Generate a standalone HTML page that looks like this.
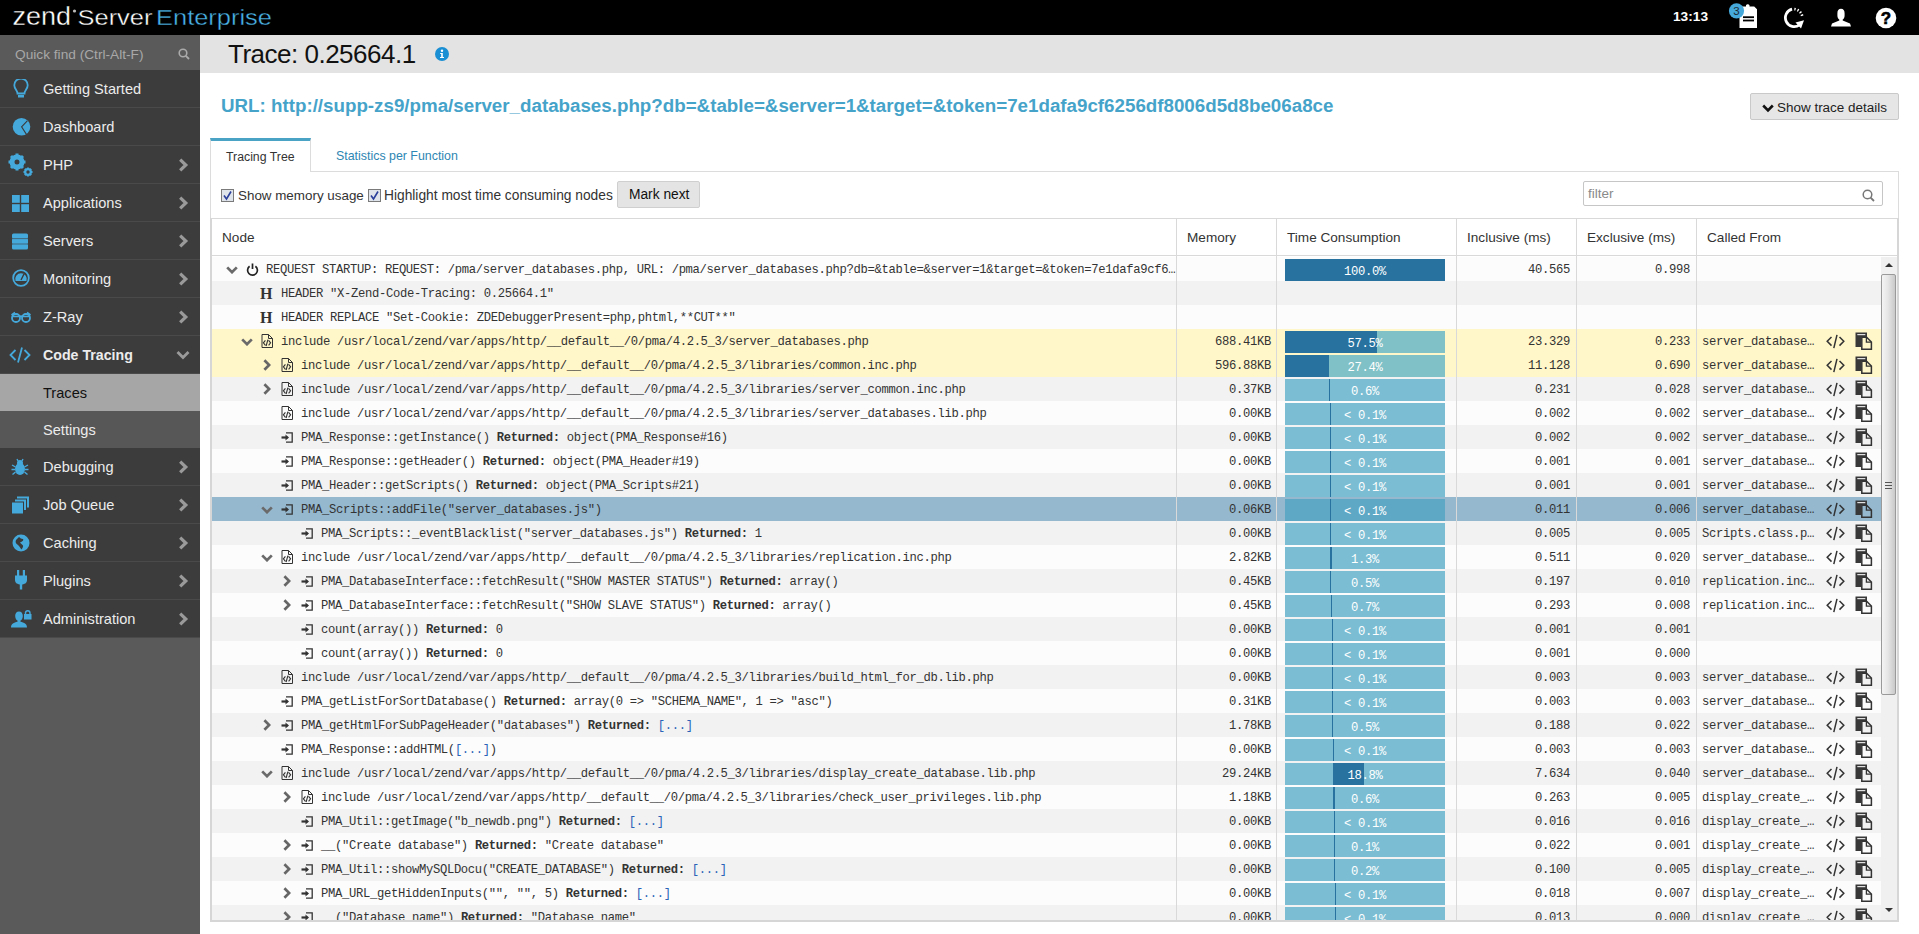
<!DOCTYPE html>
<html><head><meta charset="utf-8"><title>Zend Server</title>
<style>
*{margin:0;padding:0;box-sizing:border-box}
html,body{width:1919px;height:934px;overflow:hidden;background:#fff;font-family:"Liberation Sans",sans-serif;color:#222}
body{position:relative}
#hdr{position:absolute;left:0;top:0;width:1919px;height:35px;background:#000;z-index:5}
.logo{position:absolute;left:0;top:0}
.clock{position:absolute;left:1673px;top:9px;font-size:13.7px;font-weight:bold;color:#fff;line-height:16px}
.hic1{position:absolute;left:1728px;top:2px}
.hic2{position:absolute;left:1783px;top:7px}
.hic3{position:absolute;left:1830px;top:8px}
.hic4{position:absolute;left:1875px;top:7px}
#side{position:absolute;left:0;top:0;width:200px;height:934px;background:#5a5a5a}
.qf{position:absolute;left:0;top:35px;width:200px;height:35px;background:#5a5a5a}
.qf span{position:absolute;left:15px;top:12px;font-size:13.7px;color:#a8a8a8;line-height:16px}
.qfs{position:absolute;left:178px;top:13px}
.si{position:absolute;left:0;width:200px;height:38px;background:#3c3c3c;border-bottom:1px solid #4a4a4a}
.sic{position:absolute;line-height:0}
.sl{position:absolute;left:43px;top:1px;line-height:37px;font-size:14.6px;color:#ececec;white-space:nowrap}
.sl.b{font-weight:bold;font-size:14.2px}
.sch{position:absolute;left:178px;top:12px}
.schd{position:absolute;left:176px;top:14px}
.sub{position:absolute;left:0;width:200px;height:37px}
.sub.tr{background:#a6a6a6}
.sub.tr .sl{color:#111}
.sub.st{background:#575757}
#titlebar{position:absolute;left:200px;top:35px;width:1719px;height:38px;background:#e3e3e3}
.tt{position:absolute;left:28px;top:4px;font-size:26px;letter-spacing:-0.5px;line-height:30px;color:#111;white-space:nowrap}
.info{position:absolute;left:235px;top:12px}
.url{position:absolute;left:221px;top:95px;font-size:18.75px;font-weight:bold;color:#45a3ca;line-height:22px;white-space:nowrap}
.stdbtn{position:absolute;left:1750px;top:93px;width:149px;height:27px;background:#e6e6e6;border:1px solid #c9c9c9;border-radius:2px}
.stdbtn svg{position:absolute;left:11px;top:10px}
.stdbtn span{position:absolute;left:26px;top:5px;font-size:13.46px;line-height:17px;color:#222;white-space:nowrap}
.tab1{position:absolute;left:210px;top:138px;width:101px;height:34px;background:#fff;border-top:3px solid #4aa3c4;border-left:1px solid #dcdcdc;border-right:1px solid #dcdcdc;font-size:12.3px;color:#333;padding-left:15px;line-height:32px;z-index:2}
.tab2{position:absolute;left:336px;top:142px;font-size:12.4px;color:#2d86b3;line-height:29px;white-space:nowrap}
.panel{position:absolute;left:210px;top:171px;width:1689px;height:751px;border:1px solid #dcdcdc;border-bottom:none}
.cb{position:absolute;top:189px;line-height:0}
.cb1{left:221px}.cb2{left:368px}
.lbl1,.lbl2{position:absolute;top:187px;font-size:13.78px;line-height:17px;color:#333;white-space:nowrap}
.lbl1{left:238px;font-size:13.4px!important}.lbl2{left:384px}
.marknext{position:absolute;left:617px;top:181px;width:83px;height:27px;background:#e4e4e4;border:1px solid #cfcfcf;border-radius:2px;font-size:13.78px;line-height:26px;color:#111;padding-left:11px}
.filter{position:absolute;left:1583px;top:181px;width:300px;height:25px;border:1px solid #c6c6c6;border-radius:2px;background:#fff}
.filter span{position:absolute;left:4px;top:3px;font-size:13.5px;color:#8a8a8a;line-height:17px}
.filter svg{position:absolute;left:278px;top:7px}
#tbl{position:absolute;left:210px;top:218px;width:1689px;height:704px;border:2px solid #d6d6d6;border-top:1px solid #d9d9d9}
.th{position:absolute;top:0;height:37px;border-bottom:1px solid #d9d9d9;font-size:13.6px;color:#333;line-height:37px;padding-left:10px;white-space:nowrap;background:#fff}
.vl{position:absolute;top:0;width:1px;height:701px;background:#d9d9d9;z-index:3}
#body{position:absolute;left:212px;top:257px;width:1669px;height:663px;overflow:hidden}
.r{position:absolute;left:0;width:1669px;height:24px;font-family:"Liberation Mono",monospace;font-size:12.2px;letter-spacing:-0.32px;color:#333;white-space:nowrap}
.r.w{background:#fcfcfc}.r.g{background:#f2f2f2}.r.hl{background:#fff6c9}.r.sel{background:#95b8cf}
.r b{font-weight:bold}
.dots{color:#2a63b8}
.ic,.tg,.hic{position:absolute}
.ic{left:0}
.tg{margin-left:-212px}
.ic{margin-left:-212px}
.hic{margin-left:-212px;top:3px;font-family:"Liberation Serif",serif;font-weight:bold;font-size:16px;line-height:20px;color:#333}
.nt{position:absolute;top:1px;line-height:24px}
.mem{position:absolute;left:965px;width:94px;top:1px;line-height:24px;text-align:right}
.bar{position:absolute;left:1073px;top:2px;width:160px;height:22px;background:#7bbdd2;overflow:hidden}
.r.hl .bar{background:#7fc1c6}
.r.sel .bar{background:#5fa8c5}
.bar .dk{position:absolute;top:0;height:22px;background:#27729f}
.bar span{position:absolute;left:0;top:1px;width:160px;text-align:center;line-height:24px;color:#fff}
.inc{position:absolute;left:1245px;width:113px;top:1px;line-height:24px;text-align:right}
.exc{position:absolute;left:1365px;width:113px;top:1px;line-height:24px;text-align:right}
.cf{position:absolute;left:1490px;top:1px;line-height:24px}
.cf1{position:absolute;left:1614px;top:5px}
.cf2{position:absolute;left:1643px;top:3px}
.sb{position:absolute;left:1881px;top:257px;width:16px;height:663px;background:#f0f0f0}
.sbup{position:absolute;left:4px;top:6px;width:0;height:0;border-left:4px solid transparent;border-right:4px solid transparent;border-bottom:4px solid #333}
.sbdn{position:absolute;left:4px;top:651px;width:0;height:0;border-left:4px solid transparent;border-right:4px solid transparent;border-top:4px solid #333}
.thumb{position:absolute;left:0;top:17px;width:15px;height:421px;border:1px solid #9a9a9a;border-radius:2px;background:linear-gradient(to right,#f4f4f4,#e6e6e6 45%,#c9c9c9)}
.grip{position:absolute;left:3px;top:207px;width:7px;height:7px;background:linear-gradient(#555 0,#555 1.5px,transparent 1.5px,transparent 3px,#555 3px,#555 4.5px,transparent 4.5px,transparent 6px,#555 6px,#555 7.5px)}

</style></head><body>
<div id="hdr">
  <svg class="logo" width="290" height="35" viewBox="0 0 290 35"><text x="12.5" y="25" font-family="Liberation Sans" font-size="25" fill="#fff" stroke="#000" stroke-width="0.35" textLength="58.5" lengthAdjust="spacingAndGlyphs">zend</text><circle cx="74.5" cy="11" r="1.6" fill="#bbb"/><text x="77.5" y="25" font-family="Liberation Sans" font-size="21.8" fill="#fff" stroke="#000" stroke-width="0.35" textLength="75" lengthAdjust="spacingAndGlyphs">Server</text><text x="156" y="25" font-family="Liberation Sans" font-size="21.8" fill="#4ab4e8" stroke="#000" stroke-width="0.35" textLength="116" lengthAdjust="spacingAndGlyphs">Enterprise</text></svg>
  <div class="clock">13:13</div>
  <svg class="hic1" width="32" height="28" viewBox="0 0 32 28"><path d="M11.5 4.5H18V3.2A2 2 0 0 1 21.5 3.2V4.5H26.2L29 7.3V26H11.5Z" fill="#fff"/><rect x="15" y="14.3" width="11" height="1.8" fill="#000"/><rect x="15" y="17.6" width="11" height="1.8" fill="#000"/><circle cx="8.5" cy="8.8" r="7.6" fill="#45a9dc"/><text x="8.5" y="13" font-family="Liberation Sans" font-size="11.5" fill="#1b2a33" text-anchor="middle">3</text></svg>
  <svg class="hic2" width="24" height="24" viewBox="0 0 24 24"><path d="M9.07 2.23A8.8 8.8 0 1 0 16.5 17.8" fill="none" stroke="#fff" stroke-width="2.8"/><path d="M12.5 15.6L21 13.2L18 21.5Z" fill="#fff"/><path d="M11.37 2.13A8.8 8.8 0 0 1 19.37 10.13" fill="none" stroke="#fff" stroke-width="2.6" stroke-dasharray="1.3 1.9"/></svg>
  <svg class="hic3" width="22" height="20" viewBox="0 0 22 20"><path d="M11 0.8C8.6 0.8 7.4 2.4 7.4 5.2V7.5C7.4 9.6 8.3 11 9.3 11.6V12.6L2 15.6L1 18.6H21L20 15.6L12.7 12.6V11.6C13.7 11 14.6 9.6 14.6 7.5V5.2C14.6 2.4 13.4 0.8 11 0.8Z" fill="#fff"/></svg>
  <svg class="hic4" width="22" height="22" viewBox="0 0 22 22"><circle cx="11" cy="11" r="10.3" fill="#fff"/><text x="11" y="17" font-family="Liberation Sans" font-weight="bold" font-size="17" fill="#000" stroke="#000" stroke-width="0.6" text-anchor="middle">?</text></svg>
</div>
<div id="side">
  <div class="qf"><span>Quick find (Ctrl-Alt-F)</span><svg class="qfs" width="12" height="12" viewBox="0 0 12 12"><circle cx="5" cy="5" r="3.8" fill="none" stroke="#aaa" stroke-width="1.6"/><path d="M7.8 7.8L11 11" stroke="#aaa" stroke-width="1.8"/></svg></div>
<div class="si" style="top:70px"><div class="sic" style="left:13px;top:9px"><svg width="16" height="20" viewBox="0 0 16 20"><path d="M4.5 14.5C4.5 11.5 1.3 9.8 1.3 6.2A6.7 6.7 0 0 1 14.7 6.2C14.7 9.8 11.5 11.5 11.5 14.5Z" fill="none" stroke="#45a9dc" stroke-width="1.8"/><rect x="5" y="16" width="6" height="2.5" fill="#45a9dc"/></svg></div><div class="sl">Getting Started</div></div>
<div class="si" style="top:108px"><div class="sic" style="left:12px;top:9px"><svg width="20" height="20" viewBox="0 0 20 20"><circle cx="9.5" cy="9.8" r="8.8" fill="#45a9dc"/><path d="M15.5 3.6L9.6 9.8L14.6 17.6" fill="none" stroke="#3c3c3c" stroke-width="1.1"/></svg></div><div class="sl">Dashboard</div></div>
<div class="si" style="top:146px"><div class="sic" style="left:8px;top:7px"><svg width="26" height="24" viewBox="0 0 26 24"><circle cx="9" cy="9" r="5" fill="none" stroke="#45a9dc" stroke-width="5"/><g stroke="#45a9dc" stroke-width="3"><path d="M9 0.5V3.5M9 14.5V17.5M0.5 9H3.5M14.5 9H17.5M3 3L5 5M13 13L15 15M3 15L5 13M13 5L15 3"/></g><circle cx="20" cy="19" r="2.8" fill="none" stroke="#45a9dc" stroke-width="2.2"/><g stroke="#45a9dc" stroke-width="1.8"><path d="M20 14.5V16.5M20 21.5V23.5M15.5 19H17.5M22.5 19H24.5M16.8 15.8L18 17M22 21L23.2 22.2M16.8 22.2L18 21M22 17L23.2 15.8"/></g></svg></div><div class="sl">PHP</div><svg class="sch" width="11" height="14" viewBox="0 0 11 14"><path d="M2.2 1.6L7.8 7L2.2 12.4" fill="none" stroke="#9a9a9a" stroke-width="3.2"/></svg></div>
<div class="si" style="top:184px"><div class="sic" style="left:12px;top:11px"><svg width="17" height="17" viewBox="0 0 17 17"><rect x="0" y="0" width="7.8" height="7.8" fill="#45a9dc"/><rect x="9.2" y="0" width="7.8" height="7.8" fill="#45a9dc"/><rect x="0" y="9.2" width="7.8" height="7.8" fill="#45a9dc"/><rect x="9.2" y="9.2" width="7.8" height="7.8" fill="#45a9dc"/></svg></div><div class="sl">Applications</div><svg class="sch" width="11" height="14" viewBox="0 0 11 14"><path d="M2.2 1.6L7.8 7L2.2 12.4" fill="none" stroke="#9a9a9a" stroke-width="3.2"/></svg></div>
<div class="si" style="top:222px"><div class="sic" style="left:11px;top:11px"><svg width="18" height="17" viewBox="0 0 18 17"><path d="M2.5 0.5H15.5Q17 0.5 17 2V4.6L16.2 5.6L17 6.6V10L16.2 11L17 12V15Q17 16.5 15.5 16.5H2.5Q1 16.5 1 15V12L1.8 11L1 10V6.6L1.8 5.6L1 4.6V2Q1 0.5 2.5 0.5Z" fill="#45a9dc"/><path d="M2 5.6H16M2 11H16" stroke="#3c3c3c" stroke-width="0.6"/></svg></div><div class="sl">Servers</div><svg class="sch" width="11" height="14" viewBox="0 0 11 14"><path d="M2.2 1.6L7.8 7L2.2 12.4" fill="none" stroke="#9a9a9a" stroke-width="3.2"/></svg></div>
<div class="si" style="top:260px"><div class="sic" style="left:12px;top:9px"><svg width="18" height="18" viewBox="0 0 18 18"><circle cx="9" cy="9" r="7.8" fill="none" stroke="#45a9dc" stroke-width="1.8"/><path d="M3.5 12A5.8 5.8 0 1 1 14.5 12Z" fill="#45a9dc"/><path d="M9 11L12 5" stroke="#3a3a3a" stroke-width="1.4"/></svg></div><div class="sl">Monitoring</div><svg class="sch" width="11" height="14" viewBox="0 0 11 14"><path d="M2.2 1.6L7.8 7L2.2 12.4" fill="none" stroke="#9a9a9a" stroke-width="3.2"/></svg></div>
<div class="si" style="top:298px"><div class="sic" style="left:11px;top:13px"><svg width="20" height="12" viewBox="0 0 20 12"><circle cx="5" cy="7" r="4" fill="none" stroke="#45a9dc" stroke-width="1.8"/><circle cx="15" cy="7" r="4" fill="none" stroke="#45a9dc" stroke-width="1.8"/><path d="M0.5 4L4 1.5M19.5 4L16 1.5M8.5 5.5Q10 4.5 11.5 5.5M1 5.5H19" fill="none" stroke="#45a9dc" stroke-width="1.6"/></svg></div><div class="sl">Z-Ray</div><svg class="sch" width="11" height="14" viewBox="0 0 11 14"><path d="M2.2 1.6L7.8 7L2.2 12.4" fill="none" stroke="#9a9a9a" stroke-width="3.2"/></svg></div>
<div class="si" style="top:336px"><div class="sic" style="left:9px;top:10px"><svg width="22" height="18" viewBox="0 0 22 18"><path d="M6.5 4L1.5 9L6.5 14M15.5 4L20.5 9L15.5 14M13 1.5L9 16.5" fill="none" stroke="#45a9dc" stroke-width="1.8"/></svg></div><div class="sl b">Code Tracing</div><svg class="schd" width="14" height="10" viewBox="0 0 14 10"><path d="M1.5 2L7 7.5L12.5 2" fill="none" stroke="#9a9a9a" stroke-width="2.8"/></svg></div>
<div class="sub tr" style="top:374px"><div class="sl">Traces</div></div><div class="sub st" style="top:411px"><div class="sl">Settings</div></div>
<div class="si" style="top:448px"><div class="sic" style="left:11px;top:10px"><svg width="18" height="18" viewBox="0 0 18 18"><ellipse cx="9" cy="11" rx="5" ry="6" fill="#45a9dc"/><circle cx="9" cy="5" r="3" fill="#45a9dc"/><g stroke="#45a9dc" stroke-width="1.4"><path d="M6 1L7 3M12 1L11 3M1 7L4.5 9M17 7L13.5 9M0.5 11.5H4M17.5 11.5H14M1.5 16.5L4.5 14M16.5 16.5L13.5 14"/></g></svg></div><div class="sl">Debugging</div><svg class="sch" width="11" height="14" viewBox="0 0 11 14"><path d="M2.2 1.6L7.8 7L2.2 12.4" fill="none" stroke="#9a9a9a" stroke-width="3.2"/></svg></div>
<div class="si" style="top:486px"><div class="sic" style="left:11px;top:10px"><svg width="19" height="18" viewBox="0 0 19 18"><rect x="6" y="0.5" width="12" height="11" fill="#45a9dc"/><rect x="3.5" y="3" width="12" height="11.5" fill="#45a9dc" stroke="#3a3a3a" stroke-width="1"/><rect x="0.5" y="6" width="12" height="12" fill="#45a9dc" stroke="#3a3a3a" stroke-width="1"/></svg></div><div class="sl">Job Queue</div><svg class="sch" width="11" height="14" viewBox="0 0 11 14"><path d="M2.2 1.6L7.8 7L2.2 12.4" fill="none" stroke="#9a9a9a" stroke-width="3.2"/></svg></div>
<div class="si" style="top:524px"><div class="sic" style="left:12px;top:10px"><svg width="18" height="18" viewBox="0 0 18 18"><circle cx="9" cy="9" r="8.5" fill="#45a9dc"/><path d="M7 3C8.5 4 9 5 11 5C12 6 10 8 8.5 8C7.5 9 10 10 11 11.5C11.5 13 10 14.5 9.5 15.5C8 14 7.5 12 6 11C4 10 3 8 4 6C5 5 6 4 7 3Z" fill="#3a3a3a"/></svg></div><div class="sl">Caching</div><svg class="sch" width="11" height="14" viewBox="0 0 11 14"><path d="M2.2 1.6L7.8 7L2.2 12.4" fill="none" stroke="#9a9a9a" stroke-width="3.2"/></svg></div>
<div class="si" style="top:562px"><div class="sic" style="left:14px;top:8px"><svg width="14" height="20" viewBox="0 0 14 20"><rect x="3" y="0" width="2.2" height="6" fill="#45a9dc"/><rect x="8.8" y="0" width="2.2" height="6" fill="#45a9dc"/><path d="M1 5.5H13V10C13 13 10.5 14.5 7 14.5C3.5 14.5 1 13 1 10Z" fill="#45a9dc"/><rect x="5.8" y="13" width="2.4" height="6.5" fill="#45a9dc"/></svg></div><div class="sl">Plugins</div><svg class="sch" width="11" height="14" viewBox="0 0 11 14"><path d="M2.2 1.6L7.8 7L2.2 12.4" fill="none" stroke="#9a9a9a" stroke-width="3.2"/></svg></div>
<div class="si" style="top:600px"><div class="sic" style="left:10px;top:10px"><svg width="22" height="18" viewBox="0 0 22 18"><path d="M9 1.5C6.5 1.5 5.2 3.5 5.2 6C5.2 8.2 6.3 10 7.5 10.5V11.8C4 12.5 1 13.8 1 17.5H17C17 13.8 14 12.5 10.5 11.8V10.5C11.7 10 12.8 8.2 12.8 6C12.8 3.5 11.5 1.5 9 1.5Z" fill="#45a9dc"/><rect x="14" y="4" width="7.5" height="5.5" fill="#45a9dc"/><path d="M15.5 4.5V3A2.2 2.2 0 0 1 20 3V4.5" fill="none" stroke="#45a9dc" stroke-width="1.4"/></svg></div><div class="sl">Administration</div><svg class="sch" width="11" height="14" viewBox="0 0 11 14"><path d="M2.2 1.6L7.8 7L2.2 12.4" fill="none" stroke="#9a9a9a" stroke-width="3.2"/></svg></div>
</div>
<div id="titlebar"><div class="tt">Trace: 0.25664.1</div><svg class="info" width="14" height="14" viewBox="0 0 14 14"><circle cx="7" cy="7" r="7" fill="#1a8fd3"/><circle cx="7" cy="3.8" r="1.2" fill="#fff"/><path d="M5.2 6H7.8V10H9V11H5V10H6.2V7H5.2Z" fill="#fff"/></svg></div>
<div class="url">URL: http://supp-zs9/pma/server_databases.php?db=&amp;table=&amp;server=1&amp;target=&amp;token=7e1dafa9cf6256df8006d5d8be06a8ce</div>
<div class="stdbtn"><svg width="12" height="9" viewBox="0 0 12 9"><path d="M1.2 1.5L6 6.3L10.8 1.5" fill="none" stroke="#111" stroke-width="2.6"/></svg><span>Show trace details</span></div>
<div class="tab1">Tracing Tree</div>
<div class="tab2">Statistics per Function</div>
<div class="panel"></div>
<div class="cb cb1"><svg width="13" height="13" viewBox="0 0 13 13"><rect x="0.5" y="0.5" width="12" height="12" fill="#dfe3ea" stroke="#7a7a7a"/><path d="M3 6.5L5.5 10L10 2.5" fill="none" stroke="#2a3f9a" stroke-width="1.6"/></svg></div>
<div class="lbl1">Show memory usage</div>
<div class="cb cb2"><svg width="13" height="13" viewBox="0 0 13 13"><rect x="0.5" y="0.5" width="12" height="12" fill="#dfe3ea" stroke="#7a7a7a"/><path d="M3 6.5L5.5 10L10 2.5" fill="none" stroke="#2a3f9a" stroke-width="1.6"/></svg></div>
<div class="lbl2">Highlight most time consuming nodes</div>
<div class="marknext">Mark next</div>
<div class="filter"><span>filter</span><svg width="13" height="13" viewBox="0 0 13 13"><circle cx="5.5" cy="5.5" r="4.3" fill="none" stroke="#777" stroke-width="1.5"/><path d="M8.6 8.6L12 12" stroke="#777" stroke-width="1.8"/></svg></div>
<div id="tbl">
  <div class="th" style="left:0;width:964px">Node</div>
  <div class="th" style="left:965px;width:99px">Memory</div>
  <div class="th" style="left:1065px;width:179px">Time Consumption</div>
  <div class="th" style="left:1245px;width:119px">Inclusive (ms)</div>
  <div class="th" style="left:1365px;width:119px">Exclusive (ms)</div>
  <div class="th nb" style="left:1485px;width:200px">Called From</div>
  <div class="vl" style="left:964px"></div><div class="vl" style="left:1064px"></div><div class="vl" style="left:1244px"></div><div class="vl" style="left:1364px"></div><div class="vl" style="left:1484px"></div>
</div>
<div id="body">
<div class="r w" style="top:0px"><svg class="tg" style="left:226px;top:9px" width="12" height="8" viewBox="0 0 12 8"><path d="M1.2 1.4L6 6.2L10.8 1.4" fill="none" stroke="#6a6a6a" stroke-width="2.7"/></svg><svg class="ic" style="left:246px;top:6px" width="13" height="13" viewBox="0 0 13 13"><path d="M3.6 3.3A4.9 4.9 0 1 0 9.4 3.3" fill="none" stroke="#222" stroke-width="1.7"/><path d="M6.5 0.5V6" stroke="#222" stroke-width="1.7"/></svg><div class="nt" style="left:54px">REQUEST STARTUP: REQUEST: /pma/server_databases.php, URL: /pma/server_databases.php?db=&amp;table=&amp;server=1&amp;target=&amp;token=7e1dafa9cf6…</div><div class="mem"></div><div class="bar"><div class="dk" style="left:0px;width:160px"></div><span>100.0%</span></div><div class="inc">40.565</div><div class="exc">0.998</div></div>
<div class="r g" style="top:24px"><span class="hic" style="left:260px">H</span><div class="nt" style="left:69px">HEADER "X-Zend-Code-Tracing: 0.25664.1"</div><div class="mem"></div><div class="inc"></div><div class="exc"></div></div>
<div class="r w" style="top:48px"><span class="hic" style="left:260px">H</span><div class="nt" style="left:69px">HEADER REPLACE "Set-Cookie: ZDEDebuggerPresent=php,phtml,**CUT**"</div><div class="mem"></div><div class="inc"></div><div class="exc"></div></div>
<div class="r hl" style="top:72px"><svg class="tg" style="left:241px;top:9px" width="12" height="8" viewBox="0 0 12 8"><path d="M1.2 1.4L6 6.2L10.8 1.4" fill="none" stroke="#6a6a6a" stroke-width="2.7"/></svg><svg class="ic" style="left:261px;top:5px" width="12" height="14" viewBox="0 0 12 14"><path d="M1 0.5H7.5L11.5 4.5V13.5H1Z" fill="none" stroke="#333" stroke-width="1"/><path d="M7.5 0.5V4.5H11.5" fill="none" stroke="#333" stroke-width="1"/><path d="M4.4 6.3L2.4 8.8L4.4 11.3M7.6 6.3L9.6 8.8L7.6 11.3M6.9 5.6L5.1 12" fill="none" stroke="#333" stroke-width="1.1"/></svg><div class="nt" style="left:69px">include /usr/local/zend/var/apps/http/__default__/0/pma/4.2.5_3/server_databases.php</div><div class="mem">688.41KB</div><div class="bar"><div class="dk" style="left:0px;width:92px"></div><span>57.5%</span></div><div class="inc">23.329</div><div class="exc">0.233</div><div class="cf">server_database…</div><svg class="cf1" width="19" height="15" viewBox="0 0 19 15"><path d="M5.5 3L1.2 7.3L5.5 11.6M13.5 3L17.8 7.3L13.5 11.6M11 0.8L7.8 14.2" fill="none" stroke="#333" stroke-width="1.5"/></svg><svg class="cf2" width="18" height="18" viewBox="0 0 18 18"><path d="M0.5 0.5H12V5H6V15H0.5Z" fill="#383838"/><rect x="2.3" y="2" width="8" height="1.2" fill="#fff" opacity="0.85"/><path d="M6.8 5.2H11.6L16.4 10V17.2H6.8Z" fill="none" stroke="#333" stroke-width="1.5"/><path d="M11.4 5.5V10.2H16" fill="none" stroke="#333" stroke-width="1.3"/></svg></div>
<div class="r hl" style="top:96px"><svg class="tg" style="left:263px;top:6px" width="8" height="12" viewBox="0 0 8 12"><path d="M1.4 1.2L6.2 6L1.4 10.8" fill="none" stroke="#666" stroke-width="2.7"/></svg><svg class="ic" style="left:281px;top:5px" width="12" height="14" viewBox="0 0 12 14"><path d="M1 0.5H7.5L11.5 4.5V13.5H1Z" fill="none" stroke="#333" stroke-width="1"/><path d="M7.5 0.5V4.5H11.5" fill="none" stroke="#333" stroke-width="1"/><path d="M4.4 6.3L2.4 8.8L4.4 11.3M7.6 6.3L9.6 8.8L7.6 11.3M6.9 5.6L5.1 12" fill="none" stroke="#333" stroke-width="1.1"/></svg><div class="nt" style="left:89px">include /usr/local/zend/var/apps/http/__default__/0/pma/4.2.5_3/libraries/common.inc.php</div><div class="mem">596.88KB</div><div class="bar"><div class="dk" style="left:0px;width:44px"></div><span>27.4%</span></div><div class="inc">11.128</div><div class="exc">0.690</div><div class="cf">server_database…</div><svg class="cf1" width="19" height="15" viewBox="0 0 19 15"><path d="M5.5 3L1.2 7.3L5.5 11.6M13.5 3L17.8 7.3L13.5 11.6M11 0.8L7.8 14.2" fill="none" stroke="#333" stroke-width="1.5"/></svg><svg class="cf2" width="18" height="18" viewBox="0 0 18 18"><path d="M0.5 0.5H12V5H6V15H0.5Z" fill="#383838"/><rect x="2.3" y="2" width="8" height="1.2" fill="#fff" opacity="0.85"/><path d="M6.8 5.2H11.6L16.4 10V17.2H6.8Z" fill="none" stroke="#333" stroke-width="1.5"/><path d="M11.4 5.5V10.2H16" fill="none" stroke="#333" stroke-width="1.3"/></svg></div>
<div class="r g" style="top:120px"><svg class="tg" style="left:263px;top:6px" width="8" height="12" viewBox="0 0 8 12"><path d="M1.4 1.2L6.2 6L1.4 10.8" fill="none" stroke="#666" stroke-width="2.7"/></svg><svg class="ic" style="left:281px;top:5px" width="12" height="14" viewBox="0 0 12 14"><path d="M1 0.5H7.5L11.5 4.5V13.5H1Z" fill="none" stroke="#333" stroke-width="1"/><path d="M7.5 0.5V4.5H11.5" fill="none" stroke="#333" stroke-width="1"/><path d="M4.4 6.3L2.4 8.8L4.4 11.3M7.6 6.3L9.6 8.8L7.6 11.3M6.9 5.6L5.1 12" fill="none" stroke="#333" stroke-width="1.1"/></svg><div class="nt" style="left:89px">include /usr/local/zend/var/apps/http/__default__/0/pma/4.2.5_3/libraries/server_common.inc.php</div><div class="mem">0.37KB</div><div class="bar"><div class="dk" style="left:44px;width:1px"></div><span>0.6%</span></div><div class="inc">0.231</div><div class="exc">0.028</div><div class="cf">server_database…</div><svg class="cf1" width="19" height="15" viewBox="0 0 19 15"><path d="M5.5 3L1.2 7.3L5.5 11.6M13.5 3L17.8 7.3L13.5 11.6M11 0.8L7.8 14.2" fill="none" stroke="#333" stroke-width="1.5"/></svg><svg class="cf2" width="18" height="18" viewBox="0 0 18 18"><path d="M0.5 0.5H12V5H6V15H0.5Z" fill="#383838"/><rect x="2.3" y="2" width="8" height="1.2" fill="#fff" opacity="0.85"/><path d="M6.8 5.2H11.6L16.4 10V17.2H6.8Z" fill="none" stroke="#333" stroke-width="1.5"/><path d="M11.4 5.5V10.2H16" fill="none" stroke="#333" stroke-width="1.3"/></svg></div>
<div class="r w" style="top:144px"><svg class="ic" style="left:281px;top:5px" width="12" height="14" viewBox="0 0 12 14"><path d="M1 0.5H7.5L11.5 4.5V13.5H1Z" fill="none" stroke="#333" stroke-width="1"/><path d="M7.5 0.5V4.5H11.5" fill="none" stroke="#333" stroke-width="1"/><path d="M4.4 6.3L2.4 8.8L4.4 11.3M7.6 6.3L9.6 8.8L7.6 11.3M6.9 5.6L5.1 12" fill="none" stroke="#333" stroke-width="1.1"/></svg><div class="nt" style="left:89px">include /usr/local/zend/var/apps/http/__default__/0/pma/4.2.5_3/libraries/server_databases.lib.php</div><div class="mem">0.00KB</div><div class="bar"><div class="dk" style="left:45px;width:1px"></div><span>< 0.1%</span></div><div class="inc">0.002</div><div class="exc">0.002</div><div class="cf">server_database…</div><svg class="cf1" width="19" height="15" viewBox="0 0 19 15"><path d="M5.5 3L1.2 7.3L5.5 11.6M13.5 3L17.8 7.3L13.5 11.6M11 0.8L7.8 14.2" fill="none" stroke="#333" stroke-width="1.5"/></svg><svg class="cf2" width="18" height="18" viewBox="0 0 18 18"><path d="M0.5 0.5H12V5H6V15H0.5Z" fill="#383838"/><rect x="2.3" y="2" width="8" height="1.2" fill="#fff" opacity="0.85"/><path d="M6.8 5.2H11.6L16.4 10V17.2H6.8Z" fill="none" stroke="#333" stroke-width="1.5"/><path d="M11.4 5.5V10.2H16" fill="none" stroke="#333" stroke-width="1.3"/></svg></div>
<div class="r g" style="top:168px"><svg class="ic" style="left:281px;top:7px" width="12" height="11" viewBox="0 0 12 11"><path d="M5 0.8H11.2V10.2H5" fill="none" stroke="#333" stroke-width="1.3"/><path d="M0.5 5.5H6.5" stroke="#333" stroke-width="2.2"/><path d="M4.5 2.5L8 5.5L4.5 8.5Z" fill="#333"/></svg><div class="nt" style="left:89px">PMA_Response::getInstance() <b>Returned:</b> object(PMA_Response#16)</div><div class="mem">0.00KB</div><div class="bar"><div class="dk" style="left:45px;width:1px"></div><span>< 0.1%</span></div><div class="inc">0.002</div><div class="exc">0.002</div><div class="cf">server_database…</div><svg class="cf1" width="19" height="15" viewBox="0 0 19 15"><path d="M5.5 3L1.2 7.3L5.5 11.6M13.5 3L17.8 7.3L13.5 11.6M11 0.8L7.8 14.2" fill="none" stroke="#333" stroke-width="1.5"/></svg><svg class="cf2" width="18" height="18" viewBox="0 0 18 18"><path d="M0.5 0.5H12V5H6V15H0.5Z" fill="#383838"/><rect x="2.3" y="2" width="8" height="1.2" fill="#fff" opacity="0.85"/><path d="M6.8 5.2H11.6L16.4 10V17.2H6.8Z" fill="none" stroke="#333" stroke-width="1.5"/><path d="M11.4 5.5V10.2H16" fill="none" stroke="#333" stroke-width="1.3"/></svg></div>
<div class="r w" style="top:192px"><svg class="ic" style="left:281px;top:7px" width="12" height="11" viewBox="0 0 12 11"><path d="M5 0.8H11.2V10.2H5" fill="none" stroke="#333" stroke-width="1.3"/><path d="M0.5 5.5H6.5" stroke="#333" stroke-width="2.2"/><path d="M4.5 2.5L8 5.5L4.5 8.5Z" fill="#333"/></svg><div class="nt" style="left:89px">PMA_Response::getHeader() <b>Returned:</b> object(PMA_Header#19)</div><div class="mem">0.00KB</div><div class="bar"><div class="dk" style="left:45px;width:1px"></div><span>< 0.1%</span></div><div class="inc">0.001</div><div class="exc">0.001</div><div class="cf">server_database…</div><svg class="cf1" width="19" height="15" viewBox="0 0 19 15"><path d="M5.5 3L1.2 7.3L5.5 11.6M13.5 3L17.8 7.3L13.5 11.6M11 0.8L7.8 14.2" fill="none" stroke="#333" stroke-width="1.5"/></svg><svg class="cf2" width="18" height="18" viewBox="0 0 18 18"><path d="M0.5 0.5H12V5H6V15H0.5Z" fill="#383838"/><rect x="2.3" y="2" width="8" height="1.2" fill="#fff" opacity="0.85"/><path d="M6.8 5.2H11.6L16.4 10V17.2H6.8Z" fill="none" stroke="#333" stroke-width="1.5"/><path d="M11.4 5.5V10.2H16" fill="none" stroke="#333" stroke-width="1.3"/></svg></div>
<div class="r g" style="top:216px"><svg class="ic" style="left:281px;top:7px" width="12" height="11" viewBox="0 0 12 11"><path d="M5 0.8H11.2V10.2H5" fill="none" stroke="#333" stroke-width="1.3"/><path d="M0.5 5.5H6.5" stroke="#333" stroke-width="2.2"/><path d="M4.5 2.5L8 5.5L4.5 8.5Z" fill="#333"/></svg><div class="nt" style="left:89px">PMA_Header::getScripts() <b>Returned:</b> object(PMA_Scripts#21)</div><div class="mem">0.00KB</div><div class="bar"><div class="dk" style="left:45px;width:1px"></div><span>< 0.1%</span></div><div class="inc">0.001</div><div class="exc">0.001</div><div class="cf">server_database…</div><svg class="cf1" width="19" height="15" viewBox="0 0 19 15"><path d="M5.5 3L1.2 7.3L5.5 11.6M13.5 3L17.8 7.3L13.5 11.6M11 0.8L7.8 14.2" fill="none" stroke="#333" stroke-width="1.5"/></svg><svg class="cf2" width="18" height="18" viewBox="0 0 18 18"><path d="M0.5 0.5H12V5H6V15H0.5Z" fill="#383838"/><rect x="2.3" y="2" width="8" height="1.2" fill="#fff" opacity="0.85"/><path d="M6.8 5.2H11.6L16.4 10V17.2H6.8Z" fill="none" stroke="#333" stroke-width="1.5"/><path d="M11.4 5.5V10.2H16" fill="none" stroke="#333" stroke-width="1.3"/></svg></div>
<div class="r sel" style="top:240px"><svg class="tg" style="left:261px;top:9px" width="12" height="8" viewBox="0 0 12 8"><path d="M1.2 1.4L6 6.2L10.8 1.4" fill="none" stroke="#6a6a6a" stroke-width="2.7"/></svg><svg class="ic" style="left:281px;top:7px" width="12" height="11" viewBox="0 0 12 11"><path d="M5 0.8H11.2V10.2H5" fill="none" stroke="#333" stroke-width="1.3"/><path d="M0.5 5.5H6.5" stroke="#333" stroke-width="2.2"/><path d="M4.5 2.5L8 5.5L4.5 8.5Z" fill="#333"/></svg><div class="nt" style="left:89px">PMA_Scripts::addFile("server_databases.js")</div><div class="mem">0.06KB</div><div class="bar"><div class="dk" style="left:45px;width:1px"></div><span>< 0.1%</span></div><div class="inc">0.011</div><div class="exc">0.006</div><div class="cf">server_database…</div><svg class="cf1" width="19" height="15" viewBox="0 0 19 15"><path d="M5.5 3L1.2 7.3L5.5 11.6M13.5 3L17.8 7.3L13.5 11.6M11 0.8L7.8 14.2" fill="none" stroke="#333" stroke-width="1.5"/></svg><svg class="cf2" width="18" height="18" viewBox="0 0 18 18"><path d="M0.5 0.5H12V5H6V15H0.5Z" fill="#383838"/><rect x="2.3" y="2" width="8" height="1.2" fill="#fff" opacity="0.85"/><path d="M6.8 5.2H11.6L16.4 10V17.2H6.8Z" fill="none" stroke="#333" stroke-width="1.5"/><path d="M11.4 5.5V10.2H16" fill="none" stroke="#333" stroke-width="1.3"/></svg></div>
<div class="r g" style="top:264px"><svg class="ic" style="left:301px;top:7px" width="12" height="11" viewBox="0 0 12 11"><path d="M5 0.8H11.2V10.2H5" fill="none" stroke="#333" stroke-width="1.3"/><path d="M0.5 5.5H6.5" stroke="#333" stroke-width="2.2"/><path d="M4.5 2.5L8 5.5L4.5 8.5Z" fill="#333"/></svg><div class="nt" style="left:109px">PMA_Scripts::_eventBlacklist("server_databases.js") <b>Returned:</b> 1</div><div class="mem">0.00KB</div><div class="bar"><div class="dk" style="left:45px;width:1px"></div><span>< 0.1%</span></div><div class="inc">0.005</div><div class="exc">0.005</div><div class="cf">Scripts.class.p…</div><svg class="cf1" width="19" height="15" viewBox="0 0 19 15"><path d="M5.5 3L1.2 7.3L5.5 11.6M13.5 3L17.8 7.3L13.5 11.6M11 0.8L7.8 14.2" fill="none" stroke="#333" stroke-width="1.5"/></svg><svg class="cf2" width="18" height="18" viewBox="0 0 18 18"><path d="M0.5 0.5H12V5H6V15H0.5Z" fill="#383838"/><rect x="2.3" y="2" width="8" height="1.2" fill="#fff" opacity="0.85"/><path d="M6.8 5.2H11.6L16.4 10V17.2H6.8Z" fill="none" stroke="#333" stroke-width="1.5"/><path d="M11.4 5.5V10.2H16" fill="none" stroke="#333" stroke-width="1.3"/></svg></div>
<div class="r w" style="top:288px"><svg class="tg" style="left:261px;top:9px" width="12" height="8" viewBox="0 0 12 8"><path d="M1.2 1.4L6 6.2L10.8 1.4" fill="none" stroke="#6a6a6a" stroke-width="2.7"/></svg><svg class="ic" style="left:281px;top:5px" width="12" height="14" viewBox="0 0 12 14"><path d="M1 0.5H7.5L11.5 4.5V13.5H1Z" fill="none" stroke="#333" stroke-width="1"/><path d="M7.5 0.5V4.5H11.5" fill="none" stroke="#333" stroke-width="1"/><path d="M4.4 6.3L2.4 8.8L4.4 11.3M7.6 6.3L9.6 8.8L7.6 11.3M6.9 5.6L5.1 12" fill="none" stroke="#333" stroke-width="1.1"/></svg><div class="nt" style="left:89px">include /usr/local/zend/var/apps/http/__default__/0/pma/4.2.5_3/libraries/replication.inc.php</div><div class="mem">2.82KB</div><div class="bar"><div class="dk" style="left:45px;width:2px"></div><span>1.3%</span></div><div class="inc">0.511</div><div class="exc">0.020</div><div class="cf">server_database…</div><svg class="cf1" width="19" height="15" viewBox="0 0 19 15"><path d="M5.5 3L1.2 7.3L5.5 11.6M13.5 3L17.8 7.3L13.5 11.6M11 0.8L7.8 14.2" fill="none" stroke="#333" stroke-width="1.5"/></svg><svg class="cf2" width="18" height="18" viewBox="0 0 18 18"><path d="M0.5 0.5H12V5H6V15H0.5Z" fill="#383838"/><rect x="2.3" y="2" width="8" height="1.2" fill="#fff" opacity="0.85"/><path d="M6.8 5.2H11.6L16.4 10V17.2H6.8Z" fill="none" stroke="#333" stroke-width="1.5"/><path d="M11.4 5.5V10.2H16" fill="none" stroke="#333" stroke-width="1.3"/></svg></div>
<div class="r g" style="top:312px"><svg class="tg" style="left:283px;top:6px" width="8" height="12" viewBox="0 0 8 12"><path d="M1.4 1.2L6.2 6L1.4 10.8" fill="none" stroke="#666" stroke-width="2.7"/></svg><svg class="ic" style="left:301px;top:7px" width="12" height="11" viewBox="0 0 12 11"><path d="M5 0.8H11.2V10.2H5" fill="none" stroke="#333" stroke-width="1.3"/><path d="M0.5 5.5H6.5" stroke="#333" stroke-width="2.2"/><path d="M4.5 2.5L8 5.5L4.5 8.5Z" fill="#333"/></svg><div class="nt" style="left:109px">PMA_DatabaseInterface::fetchResult("SHOW MASTER STATUS") <b>Returned:</b> array()</div><div class="mem">0.45KB</div><div class="bar"><div class="dk" style="left:45px;width:1px"></div><span>0.5%</span></div><div class="inc">0.197</div><div class="exc">0.010</div><div class="cf">replication.inc…</div><svg class="cf1" width="19" height="15" viewBox="0 0 19 15"><path d="M5.5 3L1.2 7.3L5.5 11.6M13.5 3L17.8 7.3L13.5 11.6M11 0.8L7.8 14.2" fill="none" stroke="#333" stroke-width="1.5"/></svg><svg class="cf2" width="18" height="18" viewBox="0 0 18 18"><path d="M0.5 0.5H12V5H6V15H0.5Z" fill="#383838"/><rect x="2.3" y="2" width="8" height="1.2" fill="#fff" opacity="0.85"/><path d="M6.8 5.2H11.6L16.4 10V17.2H6.8Z" fill="none" stroke="#333" stroke-width="1.5"/><path d="M11.4 5.5V10.2H16" fill="none" stroke="#333" stroke-width="1.3"/></svg></div>
<div class="r w" style="top:336px"><svg class="tg" style="left:283px;top:6px" width="8" height="12" viewBox="0 0 8 12"><path d="M1.4 1.2L6.2 6L1.4 10.8" fill="none" stroke="#666" stroke-width="2.7"/></svg><svg class="ic" style="left:301px;top:7px" width="12" height="11" viewBox="0 0 12 11"><path d="M5 0.8H11.2V10.2H5" fill="none" stroke="#333" stroke-width="1.3"/><path d="M0.5 5.5H6.5" stroke="#333" stroke-width="2.2"/><path d="M4.5 2.5L8 5.5L4.5 8.5Z" fill="#333"/></svg><div class="nt" style="left:109px">PMA_DatabaseInterface::fetchResult("SHOW SLAVE STATUS") <b>Returned:</b> array()</div><div class="mem">0.45KB</div><div class="bar"><div class="dk" style="left:46px;width:1px"></div><span>0.7%</span></div><div class="inc">0.293</div><div class="exc">0.008</div><div class="cf">replication.inc…</div><svg class="cf1" width="19" height="15" viewBox="0 0 19 15"><path d="M5.5 3L1.2 7.3L5.5 11.6M13.5 3L17.8 7.3L13.5 11.6M11 0.8L7.8 14.2" fill="none" stroke="#333" stroke-width="1.5"/></svg><svg class="cf2" width="18" height="18" viewBox="0 0 18 18"><path d="M0.5 0.5H12V5H6V15H0.5Z" fill="#383838"/><rect x="2.3" y="2" width="8" height="1.2" fill="#fff" opacity="0.85"/><path d="M6.8 5.2H11.6L16.4 10V17.2H6.8Z" fill="none" stroke="#333" stroke-width="1.5"/><path d="M11.4 5.5V10.2H16" fill="none" stroke="#333" stroke-width="1.3"/></svg></div>
<div class="r g" style="top:360px"><svg class="ic" style="left:301px;top:7px" width="12" height="11" viewBox="0 0 12 11"><path d="M5 0.8H11.2V10.2H5" fill="none" stroke="#333" stroke-width="1.3"/><path d="M0.5 5.5H6.5" stroke="#333" stroke-width="2.2"/><path d="M4.5 2.5L8 5.5L4.5 8.5Z" fill="#333"/></svg><div class="nt" style="left:109px">count(array()) <b>Returned:</b> 0</div><div class="mem">0.00KB</div><div class="bar"><div class="dk" style="left:47px;width:1px"></div><span>< 0.1%</span></div><div class="inc">0.001</div><div class="exc">0.001</div></div>
<div class="r w" style="top:384px"><svg class="ic" style="left:301px;top:7px" width="12" height="11" viewBox="0 0 12 11"><path d="M5 0.8H11.2V10.2H5" fill="none" stroke="#333" stroke-width="1.3"/><path d="M0.5 5.5H6.5" stroke="#333" stroke-width="2.2"/><path d="M4.5 2.5L8 5.5L4.5 8.5Z" fill="#333"/></svg><div class="nt" style="left:109px">count(array()) <b>Returned:</b> 0</div><div class="mem">0.00KB</div><div class="bar"><div class="dk" style="left:47px;width:1px"></div><span>< 0.1%</span></div><div class="inc">0.001</div><div class="exc">0.000</div></div>
<div class="r g" style="top:408px"><svg class="ic" style="left:281px;top:5px" width="12" height="14" viewBox="0 0 12 14"><path d="M1 0.5H7.5L11.5 4.5V13.5H1Z" fill="none" stroke="#333" stroke-width="1"/><path d="M7.5 0.5V4.5H11.5" fill="none" stroke="#333" stroke-width="1"/><path d="M4.4 6.3L2.4 8.8L4.4 11.3M7.6 6.3L9.6 8.8L7.6 11.3M6.9 5.6L5.1 12" fill="none" stroke="#333" stroke-width="1.1"/></svg><div class="nt" style="left:89px">include /usr/local/zend/var/apps/http/__default__/0/pma/4.2.5_3/libraries/build_html_for_db.lib.php</div><div class="mem">0.00KB</div><div class="bar"><div class="dk" style="left:47px;width:1px"></div><span>< 0.1%</span></div><div class="inc">0.003</div><div class="exc">0.003</div><div class="cf">server_database…</div><svg class="cf1" width="19" height="15" viewBox="0 0 19 15"><path d="M5.5 3L1.2 7.3L5.5 11.6M13.5 3L17.8 7.3L13.5 11.6M11 0.8L7.8 14.2" fill="none" stroke="#333" stroke-width="1.5"/></svg><svg class="cf2" width="18" height="18" viewBox="0 0 18 18"><path d="M0.5 0.5H12V5H6V15H0.5Z" fill="#383838"/><rect x="2.3" y="2" width="8" height="1.2" fill="#fff" opacity="0.85"/><path d="M6.8 5.2H11.6L16.4 10V17.2H6.8Z" fill="none" stroke="#333" stroke-width="1.5"/><path d="M11.4 5.5V10.2H16" fill="none" stroke="#333" stroke-width="1.3"/></svg></div>
<div class="r w" style="top:432px"><svg class="ic" style="left:281px;top:7px" width="12" height="11" viewBox="0 0 12 11"><path d="M5 0.8H11.2V10.2H5" fill="none" stroke="#333" stroke-width="1.3"/><path d="M0.5 5.5H6.5" stroke="#333" stroke-width="2.2"/><path d="M4.5 2.5L8 5.5L4.5 8.5Z" fill="#333"/></svg><div class="nt" style="left:89px">PMA_getListForSortDatabase() <b>Returned:</b> array(0 =&gt; "SCHEMA_NAME", 1 =&gt; "asc")</div><div class="mem">0.31KB</div><div class="bar"><div class="dk" style="left:47px;width:1px"></div><span>< 0.1%</span></div><div class="inc">0.003</div><div class="exc">0.003</div><div class="cf">server_database…</div><svg class="cf1" width="19" height="15" viewBox="0 0 19 15"><path d="M5.5 3L1.2 7.3L5.5 11.6M13.5 3L17.8 7.3L13.5 11.6M11 0.8L7.8 14.2" fill="none" stroke="#333" stroke-width="1.5"/></svg><svg class="cf2" width="18" height="18" viewBox="0 0 18 18"><path d="M0.5 0.5H12V5H6V15H0.5Z" fill="#383838"/><rect x="2.3" y="2" width="8" height="1.2" fill="#fff" opacity="0.85"/><path d="M6.8 5.2H11.6L16.4 10V17.2H6.8Z" fill="none" stroke="#333" stroke-width="1.5"/><path d="M11.4 5.5V10.2H16" fill="none" stroke="#333" stroke-width="1.3"/></svg></div>
<div class="r g" style="top:456px"><svg class="tg" style="left:263px;top:6px" width="8" height="12" viewBox="0 0 8 12"><path d="M1.4 1.2L6.2 6L1.4 10.8" fill="none" stroke="#666" stroke-width="2.7"/></svg><svg class="ic" style="left:281px;top:7px" width="12" height="11" viewBox="0 0 12 11"><path d="M5 0.8H11.2V10.2H5" fill="none" stroke="#333" stroke-width="1.3"/><path d="M0.5 5.5H6.5" stroke="#333" stroke-width="2.2"/><path d="M4.5 2.5L8 5.5L4.5 8.5Z" fill="#333"/></svg><div class="nt" style="left:89px">PMA_getHtmlForSubPageHeader("databases") <b>Returned:</b> <span class="dots">[...]</span></div><div class="mem">1.78KB</div><div class="bar"><div class="dk" style="left:47px;width:1px"></div><span>0.5%</span></div><div class="inc">0.188</div><div class="exc">0.022</div><div class="cf">server_database…</div><svg class="cf1" width="19" height="15" viewBox="0 0 19 15"><path d="M5.5 3L1.2 7.3L5.5 11.6M13.5 3L17.8 7.3L13.5 11.6M11 0.8L7.8 14.2" fill="none" stroke="#333" stroke-width="1.5"/></svg><svg class="cf2" width="18" height="18" viewBox="0 0 18 18"><path d="M0.5 0.5H12V5H6V15H0.5Z" fill="#383838"/><rect x="2.3" y="2" width="8" height="1.2" fill="#fff" opacity="0.85"/><path d="M6.8 5.2H11.6L16.4 10V17.2H6.8Z" fill="none" stroke="#333" stroke-width="1.5"/><path d="M11.4 5.5V10.2H16" fill="none" stroke="#333" stroke-width="1.3"/></svg></div>
<div class="r w" style="top:480px"><svg class="ic" style="left:281px;top:7px" width="12" height="11" viewBox="0 0 12 11"><path d="M5 0.8H11.2V10.2H5" fill="none" stroke="#333" stroke-width="1.3"/><path d="M0.5 5.5H6.5" stroke="#333" stroke-width="2.2"/><path d="M4.5 2.5L8 5.5L4.5 8.5Z" fill="#333"/></svg><div class="nt" style="left:89px">PMA_Response::addHTML(<span class="dots">[...]</span>)</div><div class="mem">0.00KB</div><div class="bar"><div class="dk" style="left:48px;width:1px"></div><span>< 0.1%</span></div><div class="inc">0.003</div><div class="exc">0.003</div><div class="cf">server_database…</div><svg class="cf1" width="19" height="15" viewBox="0 0 19 15"><path d="M5.5 3L1.2 7.3L5.5 11.6M13.5 3L17.8 7.3L13.5 11.6M11 0.8L7.8 14.2" fill="none" stroke="#333" stroke-width="1.5"/></svg><svg class="cf2" width="18" height="18" viewBox="0 0 18 18"><path d="M0.5 0.5H12V5H6V15H0.5Z" fill="#383838"/><rect x="2.3" y="2" width="8" height="1.2" fill="#fff" opacity="0.85"/><path d="M6.8 5.2H11.6L16.4 10V17.2H6.8Z" fill="none" stroke="#333" stroke-width="1.5"/><path d="M11.4 5.5V10.2H16" fill="none" stroke="#333" stroke-width="1.3"/></svg></div>
<div class="r g" style="top:504px"><svg class="tg" style="left:261px;top:9px" width="12" height="8" viewBox="0 0 12 8"><path d="M1.2 1.4L6 6.2L10.8 1.4" fill="none" stroke="#6a6a6a" stroke-width="2.7"/></svg><svg class="ic" style="left:281px;top:5px" width="12" height="14" viewBox="0 0 12 14"><path d="M1 0.5H7.5L11.5 4.5V13.5H1Z" fill="none" stroke="#333" stroke-width="1"/><path d="M7.5 0.5V4.5H11.5" fill="none" stroke="#333" stroke-width="1"/><path d="M4.4 6.3L2.4 8.8L4.4 11.3M7.6 6.3L9.6 8.8L7.6 11.3M6.9 5.6L5.1 12" fill="none" stroke="#333" stroke-width="1.1"/></svg><div class="nt" style="left:89px">include /usr/local/zend/var/apps/http/__default__/0/pma/4.2.5_3/libraries/display_create_database.lib.php</div><div class="mem">29.24KB</div><div class="bar"><div class="dk" style="left:48px;width:31px"></div><span>18.8%</span></div><div class="inc">7.634</div><div class="exc">0.040</div><div class="cf">server_database…</div><svg class="cf1" width="19" height="15" viewBox="0 0 19 15"><path d="M5.5 3L1.2 7.3L5.5 11.6M13.5 3L17.8 7.3L13.5 11.6M11 0.8L7.8 14.2" fill="none" stroke="#333" stroke-width="1.5"/></svg><svg class="cf2" width="18" height="18" viewBox="0 0 18 18"><path d="M0.5 0.5H12V5H6V15H0.5Z" fill="#383838"/><rect x="2.3" y="2" width="8" height="1.2" fill="#fff" opacity="0.85"/><path d="M6.8 5.2H11.6L16.4 10V17.2H6.8Z" fill="none" stroke="#333" stroke-width="1.5"/><path d="M11.4 5.5V10.2H16" fill="none" stroke="#333" stroke-width="1.3"/></svg></div>
<div class="r w" style="top:528px"><svg class="tg" style="left:283px;top:6px" width="8" height="12" viewBox="0 0 8 12"><path d="M1.4 1.2L6.2 6L1.4 10.8" fill="none" stroke="#666" stroke-width="2.7"/></svg><svg class="ic" style="left:301px;top:5px" width="12" height="14" viewBox="0 0 12 14"><path d="M1 0.5H7.5L11.5 4.5V13.5H1Z" fill="none" stroke="#333" stroke-width="1"/><path d="M7.5 0.5V4.5H11.5" fill="none" stroke="#333" stroke-width="1"/><path d="M4.4 6.3L2.4 8.8L4.4 11.3M7.6 6.3L9.6 8.8L7.6 11.3M6.9 5.6L5.1 12" fill="none" stroke="#333" stroke-width="1.1"/></svg><div class="nt" style="left:109px">include /usr/local/zend/var/apps/http/__default__/0/pma/4.2.5_3/libraries/check_user_privileges.lib.php</div><div class="mem">1.18KB</div><div class="bar"><div class="dk" style="left:48px;width:2px"></div><span>0.6%</span></div><div class="inc">0.263</div><div class="exc">0.005</div><div class="cf">display_create_…</div><svg class="cf1" width="19" height="15" viewBox="0 0 19 15"><path d="M5.5 3L1.2 7.3L5.5 11.6M13.5 3L17.8 7.3L13.5 11.6M11 0.8L7.8 14.2" fill="none" stroke="#333" stroke-width="1.5"/></svg><svg class="cf2" width="18" height="18" viewBox="0 0 18 18"><path d="M0.5 0.5H12V5H6V15H0.5Z" fill="#383838"/><rect x="2.3" y="2" width="8" height="1.2" fill="#fff" opacity="0.85"/><path d="M6.8 5.2H11.6L16.4 10V17.2H6.8Z" fill="none" stroke="#333" stroke-width="1.5"/><path d="M11.4 5.5V10.2H16" fill="none" stroke="#333" stroke-width="1.3"/></svg></div>
<div class="r g" style="top:552px"><svg class="ic" style="left:301px;top:7px" width="12" height="11" viewBox="0 0 12 11"><path d="M5 0.8H11.2V10.2H5" fill="none" stroke="#333" stroke-width="1.3"/><path d="M0.5 5.5H6.5" stroke="#333" stroke-width="2.2"/><path d="M4.5 2.5L8 5.5L4.5 8.5Z" fill="#333"/></svg><div class="nt" style="left:109px">PMA_Util::getImage("b_newdb.png") <b>Returned:</b> <span class="dots">[...]</span></div><div class="mem">0.00KB</div><div class="bar"><div class="dk" style="left:49px;width:1px"></div><span>< 0.1%</span></div><div class="inc">0.016</div><div class="exc">0.016</div><div class="cf">display_create_…</div><svg class="cf1" width="19" height="15" viewBox="0 0 19 15"><path d="M5.5 3L1.2 7.3L5.5 11.6M13.5 3L17.8 7.3L13.5 11.6M11 0.8L7.8 14.2" fill="none" stroke="#333" stroke-width="1.5"/></svg><svg class="cf2" width="18" height="18" viewBox="0 0 18 18"><path d="M0.5 0.5H12V5H6V15H0.5Z" fill="#383838"/><rect x="2.3" y="2" width="8" height="1.2" fill="#fff" opacity="0.85"/><path d="M6.8 5.2H11.6L16.4 10V17.2H6.8Z" fill="none" stroke="#333" stroke-width="1.5"/><path d="M11.4 5.5V10.2H16" fill="none" stroke="#333" stroke-width="1.3"/></svg></div>
<div class="r w" style="top:576px"><svg class="tg" style="left:283px;top:6px" width="8" height="12" viewBox="0 0 8 12"><path d="M1.4 1.2L6.2 6L1.4 10.8" fill="none" stroke="#666" stroke-width="2.7"/></svg><svg class="ic" style="left:301px;top:7px" width="12" height="11" viewBox="0 0 12 11"><path d="M5 0.8H11.2V10.2H5" fill="none" stroke="#333" stroke-width="1.3"/><path d="M0.5 5.5H6.5" stroke="#333" stroke-width="2.2"/><path d="M4.5 2.5L8 5.5L4.5 8.5Z" fill="#333"/></svg><div class="nt" style="left:109px">__("Create database") <b>Returned:</b> "Create database"</div><div class="mem">0.00KB</div><div class="bar"><div class="dk" style="left:49px;width:1px"></div><span>0.1%</span></div><div class="inc">0.022</div><div class="exc">0.001</div><div class="cf">display_create_…</div><svg class="cf1" width="19" height="15" viewBox="0 0 19 15"><path d="M5.5 3L1.2 7.3L5.5 11.6M13.5 3L17.8 7.3L13.5 11.6M11 0.8L7.8 14.2" fill="none" stroke="#333" stroke-width="1.5"/></svg><svg class="cf2" width="18" height="18" viewBox="0 0 18 18"><path d="M0.5 0.5H12V5H6V15H0.5Z" fill="#383838"/><rect x="2.3" y="2" width="8" height="1.2" fill="#fff" opacity="0.85"/><path d="M6.8 5.2H11.6L16.4 10V17.2H6.8Z" fill="none" stroke="#333" stroke-width="1.5"/><path d="M11.4 5.5V10.2H16" fill="none" stroke="#333" stroke-width="1.3"/></svg></div>
<div class="r g" style="top:600px"><svg class="tg" style="left:283px;top:6px" width="8" height="12" viewBox="0 0 8 12"><path d="M1.4 1.2L6.2 6L1.4 10.8" fill="none" stroke="#666" stroke-width="2.7"/></svg><svg class="ic" style="left:301px;top:7px" width="12" height="11" viewBox="0 0 12 11"><path d="M5 0.8H11.2V10.2H5" fill="none" stroke="#333" stroke-width="1.3"/><path d="M0.5 5.5H6.5" stroke="#333" stroke-width="2.2"/><path d="M4.5 2.5L8 5.5L4.5 8.5Z" fill="#333"/></svg><div class="nt" style="left:109px">PMA_Util::showMySQLDocu("CREATE_DATABASE") <b>Returned:</b> <span class="dots">[...]</span></div><div class="mem">0.00KB</div><div class="bar"><div class="dk" style="left:49px;width:1px"></div><span>0.2%</span></div><div class="inc">0.100</div><div class="exc">0.005</div><div class="cf">display_create_…</div><svg class="cf1" width="19" height="15" viewBox="0 0 19 15"><path d="M5.5 3L1.2 7.3L5.5 11.6M13.5 3L17.8 7.3L13.5 11.6M11 0.8L7.8 14.2" fill="none" stroke="#333" stroke-width="1.5"/></svg><svg class="cf2" width="18" height="18" viewBox="0 0 18 18"><path d="M0.5 0.5H12V5H6V15H0.5Z" fill="#383838"/><rect x="2.3" y="2" width="8" height="1.2" fill="#fff" opacity="0.85"/><path d="M6.8 5.2H11.6L16.4 10V17.2H6.8Z" fill="none" stroke="#333" stroke-width="1.5"/><path d="M11.4 5.5V10.2H16" fill="none" stroke="#333" stroke-width="1.3"/></svg></div>
<div class="r w" style="top:624px"><svg class="tg" style="left:283px;top:6px" width="8" height="12" viewBox="0 0 8 12"><path d="M1.4 1.2L6.2 6L1.4 10.8" fill="none" stroke="#666" stroke-width="2.7"/></svg><svg class="ic" style="left:301px;top:7px" width="12" height="11" viewBox="0 0 12 11"><path d="M5 0.8H11.2V10.2H5" fill="none" stroke="#333" stroke-width="1.3"/><path d="M0.5 5.5H6.5" stroke="#333" stroke-width="2.2"/><path d="M4.5 2.5L8 5.5L4.5 8.5Z" fill="#333"/></svg><div class="nt" style="left:109px">PMA_URL_getHiddenInputs("", "", 5) <b>Returned:</b> <span class="dots">[...]</span></div><div class="mem">0.00KB</div><div class="bar"><div class="dk" style="left:50px;width:1px"></div><span>< 0.1%</span></div><div class="inc">0.018</div><div class="exc">0.007</div><div class="cf">display_create_…</div><svg class="cf1" width="19" height="15" viewBox="0 0 19 15"><path d="M5.5 3L1.2 7.3L5.5 11.6M13.5 3L17.8 7.3L13.5 11.6M11 0.8L7.8 14.2" fill="none" stroke="#333" stroke-width="1.5"/></svg><svg class="cf2" width="18" height="18" viewBox="0 0 18 18"><path d="M0.5 0.5H12V5H6V15H0.5Z" fill="#383838"/><rect x="2.3" y="2" width="8" height="1.2" fill="#fff" opacity="0.85"/><path d="M6.8 5.2H11.6L16.4 10V17.2H6.8Z" fill="none" stroke="#333" stroke-width="1.5"/><path d="M11.4 5.5V10.2H16" fill="none" stroke="#333" stroke-width="1.3"/></svg></div>
<div class="r g" style="top:648px"><svg class="tg" style="left:283px;top:6px" width="8" height="12" viewBox="0 0 8 12"><path d="M1.4 1.2L6.2 6L1.4 10.8" fill="none" stroke="#666" stroke-width="2.7"/></svg><svg class="ic" style="left:301px;top:7px" width="12" height="11" viewBox="0 0 12 11"><path d="M5 0.8H11.2V10.2H5" fill="none" stroke="#333" stroke-width="1.3"/><path d="M0.5 5.5H6.5" stroke="#333" stroke-width="2.2"/><path d="M4.5 2.5L8 5.5L4.5 8.5Z" fill="#333"/></svg><div class="nt" style="left:109px">__("Database name") <b>Returned:</b> "Database name"</div><div class="mem">0.00KB</div><div class="bar"><div class="dk" style="left:50px;width:1px"></div><span>< 0.1%</span></div><div class="inc">0.013</div><div class="exc">0.000</div><div class="cf">display_create_…</div><svg class="cf1" width="19" height="15" viewBox="0 0 19 15"><path d="M5.5 3L1.2 7.3L5.5 11.6M13.5 3L17.8 7.3L13.5 11.6M11 0.8L7.8 14.2" fill="none" stroke="#333" stroke-width="1.5"/></svg><svg class="cf2" width="18" height="18" viewBox="0 0 18 18"><path d="M0.5 0.5H12V5H6V15H0.5Z" fill="#383838"/><rect x="2.3" y="2" width="8" height="1.2" fill="#fff" opacity="0.85"/><path d="M6.8 5.2H11.6L16.4 10V17.2H6.8Z" fill="none" stroke="#333" stroke-width="1.5"/><path d="M11.4 5.5V10.2H16" fill="none" stroke="#333" stroke-width="1.3"/></svg></div>
</div>
<div class="sb"><div class="sbup"></div><div class="thumb"><div class="grip"></div></div><div class="sbdn"></div></div>
</body></html>
